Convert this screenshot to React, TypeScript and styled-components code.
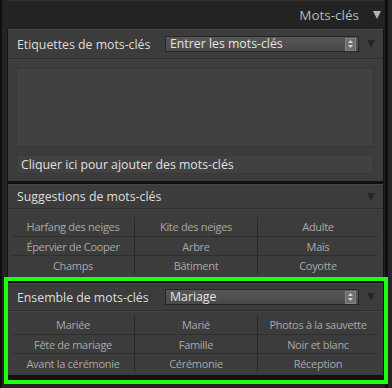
import styled, { createGlobalStyle } from "styled-components";

const GlobalStyle = createGlobalStyle`
    * {
        box-sizing: border-box;
    }
    body {
        margin: 0;
        background: #0e0e0e;
        font-family: "Open Sans", "Noto Sans", sans-serif;
    }
`

const suggestions = [
    "Harfang des neiges", "Kite des neiges", "Adulte",
    "Épervier de Cooper", "Arbre", "Maïs",
    "Champs", "Bâtiment", "Coyotte",
]

const keywordSet = [
    "Mariée", "Marié", "Photos à la sauvette",
    "Fête de mariage", "Famille", "Noir et blanc",
    "Avant la cérémonie", "Cérémonie", "Réception",
]

const Spinner = () => (
    <SpinBox>
        <svg width="7" height="10" viewBox="0 0 7 10">
            <path d="M3.5 1 L6 4 H1 Z" fill="#d4d4d4"/>
            <path d="M3.5 9 L6 6 H1 Z" fill="#d4d4d4"/>
        </svg>
    </SpinBox>
)

const Dropdown = ({value}: { value: string }) => (
    <Select>
        <SelectText>{value}</SelectText>
        <Spinner/>
    </Select>
)

const KeywordGrid = ({items, top}: { items: string[]; top: number }) => (
    <Grid $top={top}>
        {items.map((item, i) => (
            <Cell key={item} $col={i % 3} $row={Math.floor(i / 3)}>{item}</Cell>
        ))}
    </Grid>
)

export default function App() {
    return (
        <>
            <GlobalStyle/>
            <Frame>
                <Column>
                    <TopBar>
                        <TopTitle>Mots-clés</TopTitle>
                        <Triangle $light/>
                    </TopBar>
                    <Panel>
                        <Section>
                            <SectionHeader $height={30}>
                                <SectionTitle>Etiquettes de mots-clés</SectionTitle>
                                <Dropdown value="Entrer les mots-clés"/>
                                <Triangle/>
                            </SectionHeader>
                            <TagsBody>
                                <TagArea/>
                                <AddField>Cliquer ici pour ajouter des mots-clés</AddField>
                            </TagsBody>
                        </Section>
                        <Section>
                            <SectionHeader $height={25}>
                                <SectionTitle>Suggestions de mots-clés</SectionTitle>
                                <Spacer/>
                                <Triangle/>
                            </SectionHeader>
                            <KeywordGrid items={suggestions} top={8}/>
                        </Section>
                        <Section $highlight>
                            <SectionHeader $height={28}>
                                <SectionTitle>Ensemble de mots-clés</SectionTitle>
                                <Dropdown value="Mariage"/>
                                <Triangle/>
                            </SectionHeader>
                            <KeywordGrid items={keywordSet} top={4}/>
                        </Section>
                    </Panel>
                </Column>
                <Track/>
            </Frame>
        </>
    )
}

const Frame = styled.div`
    display: flex;
    width: 392px;
    height: 388px;
    background: #0e0e0e;
    overflow: hidden;
`

const Column = styled.div`
    display: flex;
    flex-direction: column;
    width: 383px;
    margin-left: 2px;
    background: #232323;
    padding: 0 1px 0 5px;
`

const Track = styled.div`
    width: 4px;
    margin-left: 3px;
    background: #262626;
`

const TopBar = styled.div`
    display: flex;
    align-items: center;
    justify-content: flex-end;
    gap: 6px;
    height: 29px;
    padding-right: 3px;
    border-top: 1px solid #303030;
    flex-shrink: 0;
`

const TopTitle = styled.span`
    font-size: 13.5px;
    color: #b8b8b8;
`

const Triangle = styled.span<{ $light?: boolean }>`
    width: 0;
    height: 0;
    border-left: 4.5px solid transparent;
    border-right: 4.5px solid transparent;
    border-top: 8px solid ${p => p.$light ? "#b4b4b4" : "#262626"};
    margin-left: 8px;
`

const Panel = styled.div`
    display: flex;
    flex-direction: column;
    gap: 3px;
    background: #111;
    border: 1px solid #151515;
    border-top: none;
    padding-bottom: 4px;
`

const Section = styled.div<{ $highlight?: boolean }>`
    position: relative;
    background: #3c3c3c;
    ${p => p.$highlight && `
        margin-top: 3px;
        &::after {
            content: "";
            position: absolute;
            left: -4px;
            right: -5px;
            top: -6px;
            bottom: -9px;
            border: 4px solid #1eff12;
            pointer-events: none;
        }
    `}
`

const SectionHeader = styled.div<{ $height: number }>`
    display: flex;
    align-items: center;
    height: ${p => p.$height}px;
    padding: 0 8px 0 9px;
    border-top: 1px solid #474747;
    border-bottom: 1px solid #2e2e2e;
    box-shadow: 0 1px 0 #444;
`

const SectionTitle = styled.span`
    width: 148px;
    font-size: 12.3px;
    color: #dedede;
    white-space: nowrap;
`

const Spacer = styled.div`
    flex: 1;
`

const Select = styled.div`
    flex: 1;
    display: flex;
    align-items: center;
    height: 16px;
    background: linear-gradient(#575757, #494949);
    border: 1px solid #262626;
    padding-left: 4px;
`

const SelectText = styled.span`
    flex: 1;
    font-size: 12.3px;
    color: #e4e4e4;
    line-height: 14px;
`

const SpinBox = styled.span`
    display: flex;
    align-items: center;
    justify-content: center;
    width: 11px;
    height: 13px;
    margin-right: 2px;
    background: #6e6e6e;
    border: 1px solid #838383;
`

const TagsBody = styled.div`
    display: flex;
    flex-direction: column;
    gap: 8px;
    padding: 9px 9px 7px 8px;
`

const TagArea = styled.div`
    height: 79px;
    background: #414141;
    border: 1px solid #383838;
`

const AddField = styled.div`
    height: 19px;
    line-height: 17px;
    padding-left: 4px;
    background: #414141;
    border: 1px solid #383838;
    font-size: 12.3px;
    color: #e0e0e0;
`

const Grid = styled.div<{ $top: number }>`
    display: grid;
    grid-template-columns: 122px 123px 1fr;
    margin: ${p => p.$top}px 5px 3px 4px;
`

const Cell = styled.div<{ $col: number; $row: number }>`
    height: 19px;
    line-height: 19px;
    text-align: center;
    font-size: 11px;
    letter-spacing: -0.3px;
    color: #a8a8a8;
    white-space: nowrap;
    border-left: ${p => p.$col > 0 ? "1px solid #2a2a2a" : "none"};
    border-top: ${p => p.$row > 0 ? "1px solid #2f2f2f" : "none"};
`
